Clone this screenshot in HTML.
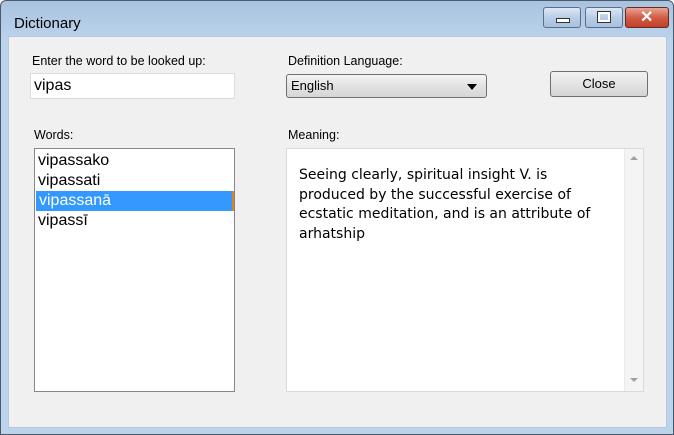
<!DOCTYPE html><html><head><style>
body{margin:0;width:674px;height:435px;overflow:hidden;font-family:"Liberation Sans",sans-serif;}
.win{position:absolute;left:0;top:0;width:672px;height:433px;border:1px solid #4a5a6e;border-radius:6px 6px 0 0;background:linear-gradient(#a9c3df,#bcd3ec 40px,#bcd3ec);}
.title{position:absolute;left:13px;top:14px;font-size:15px;color:#000;}
.client{position:absolute;left:8px;top:36px;width:657px;height:390px;background:#f0f0f0;border:1px solid #b5c7dc;}
.a{position:absolute;}
.lbl{font-size:12.5px;color:#000;}
.tb{position:absolute;top:6px;height:19px;border:1px solid #5a6f8a;border-radius:3px;background:linear-gradient(#dce8f5,#b9cde6 50%,#a8c0df);}
</style></head><body>
<div class="win">
<div class="title">Dictionary</div>
<div class="tb" style="left:542px;width:36px"><div class="a" style="left:12px;top:10px;width:12px;height:3px;background:#fff;border:1px solid #333"></div></div>
<div class="tb" style="left:584px;width:36px"><div class="a" style="left:12px;top:4px;width:8px;height:6px;border:2px solid #fff;outline:1px solid #333"></div></div>
<div class="tb" style="left:624px;width:42px;background:linear-gradient(#e8a595,#d25c45 50%,#c0402a);border-color:#6b2a20"><div class="a" style="left:14px;top:-1px;color:#fff;font-weight:bold;font-size:16px">✕</div></div>
</div>
<div class="client"></div>
<div class="a lbl" style="left:32px;top:54px">Enter the word to be looked up:</div>
<div class="a" style="left:30px;top:73px;background:#fff;border:1px solid #dcdcdc;font-size:16px;line-height:24px;box-sizing:border-box;padding-left:3px;width:205px;height:26px">vipas</div>
<div class="a lbl" style="left:288px;top:54px">Definition Language:</div>
<div class="a" style="left:286px;top:74px;width:201px;height:24px;box-sizing:border-box;border:1px solid #707070;border-radius:3px;background:linear-gradient(#f4f4f4,#e2e2e2 50%,#d6d6d6);font-size:13px;line-height:22px;padding-left:4px">English<div class="a" style="right:9px;top:9px;width:0;height:0;border-left:5px solid transparent;border-right:5px solid transparent;border-top:6px solid #000"></div></div>
<div class="a" style="left:550px;top:71px;width:98px;height:26px;box-sizing:border-box;border:1px solid #707070;border-radius:3px;background:linear-gradient(#f2f2f2,#e4e4e4 50%,#d4d4d4);font-size:13px;text-align:center;line-height:24px">Close</div>
<div class="a lbl" style="left:34px;top:128px">Words:</div>
<div class="a lbl" style="left:288px;top:128px">Meaning:</div>
<div class="a" style="left:34px;top:148px;width:201px;height:244px;box-sizing:border-box;border:1px solid #828790;background:#fff;font-size:16px;line-height:20px;padding-top:2px">
<div style="padding-left:3px">vipassako</div><div style="padding-left:3px">vipassati</div>
<div style="padding-left:3px;background:#3399ff;color:#fff;border-right:2px solid #e08020;margin:0 0 0 1px">vipassanā</div>
<div style="padding-left:3px">vipassī</div></div>
<div class="a" style="left:286px;top:148px;width:358px;height:244px;box-sizing:border-box;border:1px solid #dadada;background:#fff;">
<div class="a" style="left:12px;top:17px;width:295px;font-family:'DejaVu Sans',sans-serif;font-size:14px;line-height:19.5px">Seeing clearly, spiritual insight V. is produced by the successful exercise of ecstatic meditation, and is an attribute of arhatship</div>
<div class="a" style="right:0;top:0;width:18px;height:242px;background:#f4f4f4;border-left:1px solid #eaeaea"></div>
<div class="a" style="right:5px;top:7px;border-left:4px solid transparent;border-right:4px solid transparent;border-bottom:4px solid #a0a0a0"></div>
<div class="a" style="right:5px;bottom:9px;border-left:4px solid transparent;border-right:4px solid transparent;border-top:4px solid #a0a0a0"></div>
</div>
</body></html>
